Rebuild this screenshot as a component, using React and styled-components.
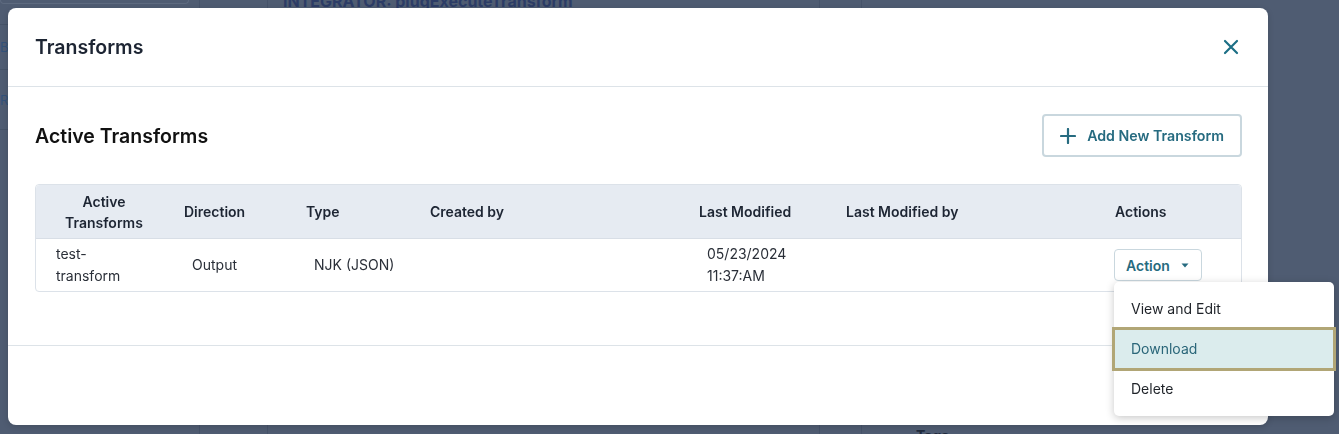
import React from "react";
import styled, { createGlobalStyle } from "styled-components";

const GlobalStyle = createGlobalStyle`
  html, body {
    margin: 0;
    padding: 0;
    width: 1339px;
    height: 434px;
    overflow: hidden;
    font-family: Inter, "Noto Sans", "Liberation Sans", sans-serif;
  }
  * { box-sizing: border-box; }
`;

/* ---------- page behind the dialog (dimmed) ---------- */
const Page = styled.div`
  width: 1339px;
  height: 434px;
  display: grid;
  grid-template-columns: 200px 68px 552px 42px 28px 1fr;
  background: #4f5c72;
  color: #2b3a58;
`;

const PageCol = styled.div`
  display: flex;
  flex-direction: column;
  border-right: ${({ $line }) => ($line ? "1px solid #46536a" : "none")};
  padding: ${({ $pad }) => $pad || "0"};
  font-size: 15px;
  font-weight: 600;
`;

const SideRow = styled.div`
  height: ${({ $h }) => $h}px;
  border-bottom: 1px solid #465368;
  display: flex;
  align-items: center;
  color: #33527a;
  font-weight: 400;
  font-size: 13px;
`;

const SideInput = styled.div`
  height: 4px;
  margin-right: 10px;
  border: 1px solid #5d6a7f;
  border-top: none;
  border-radius: 0 0 4px 4px;
`;

const PageTitle = styled.div`
  margin-top: -9px;
  font-size: 16px;
  font-weight: 700;
  color: #2c3c66;
  white-space: nowrap;
`;

const PageLabel = styled.div`
  margin-top: auto;
  margin-bottom: -10px;
  font-size: 14px;
  font-weight: 700;
  color: #1f2a3d;
`;

/* ---------- overlay + modal ---------- */
const Overlay = styled.div`
  position: fixed;
  inset: 0;
  padding: 8px 71px 9px 8px;
  display: flex;
`;

const Modal = styled.div`
  flex: 1;
  display: flex;
  flex-direction: column;
  background: #ffffff;
  border-radius: 8px;
  box-shadow: 0 2px 6px rgba(0, 0, 0, 0.15);
`;

const ModalHeader = styled.div`
  height: 79px;
  padding: 0 27px;
  display: flex;
  align-items: center;
  justify-content: space-between;
  border-bottom: 1px solid #dde3e8;
`;

const ModalTitle = styled.h2`
  margin: 0;
  font-size: 19.5px;
  font-weight: 600;
  color: #1d2533;
`;

const CloseButton = styled.button`
  border: none;
  background: none;
  padding: 0;
  width: 20px;
  height: 20px;
  display: flex;
  align-items: center;
  justify-content: center;
  color: #1c6f86;
  cursor: pointer;
`;

const ModalBody = styled.div`
  padding: 27px 26px 53px 27px;
  display: flex;
  flex-direction: column;
  gap: 27px;
  border-bottom: 1px solid #dde3e8;
`;

const Toolbar = styled.div`
  display: flex;
  align-items: center;
  justify-content: space-between;
`;

const SectionTitle = styled.h3`
  margin: 0;
  font-size: 19.5px;
  font-weight: 600;
  color: #111111;
`;

const OutlineButton = styled.button`
  display: flex;
  align-items: center;
  gap: ${({ $gap }) => $gap || 10}px;
  height: ${({ $h }) => $h}px;
  padding: ${({ $pad }) => $pad};
  background: #ffffff;
  border: ${({ $bw }) => $bw || 1}px solid #c9d7de;
  border-radius: 4px;
  color: #266b80;
  font-family: inherit;
  font-size: ${({ $fs }) => $fs || 14}px;
  font-weight: 600;
  cursor: pointer;
`;

const ModalFooter = styled.div`
  flex: 1;
`;

/* ---------- table ---------- */
const COLS = "136px 122px 124px 269px 147px 269px 1fr";

const Table = styled.div`
  border: 1px solid #dce2e9;
  border-radius: 4px;
`;

const HeadRow = styled.div`
  display: grid;
  grid-template-columns: ${COLS};
  height: 54px;
  background: #e6ebf2;
  border-bottom: 1px solid #d8dee6;
  border-radius: 4px 4px 0 0;
`;

const HeadCell = styled.div`
  display: flex;
  align-items: center;
  justify-content: ${({ $center }) => ($center ? "center" : "flex-start")};
  text-align: ${({ $center }) => ($center ? "center" : "left")};
  padding: 0 12px;
  font-size: 14px;
  font-weight: 600;
  line-height: 21px;
  color: #1d2533;
`;

const BodyRow = styled.div`
  display: grid;
  grid-template-columns: ${COLS};
  height: 52px;
`;

const Cell = styled.div`
  display: flex;
  align-items: center;
  padding: 0 20px 0 ${({ $pl }) => $pl || 20}px;
  font-size: 14px;
  line-height: 22px;
  color: #2a2f38;
`;

const CellText = styled.span`
  max-width: ${({ $w }) => ($w ? `${$w}px` : "none")};
`;

/* ---------- dropdown ---------- */
const ActionWrap = styled.div`
  position: relative;
`;

const Menu = styled.ul`
  position: absolute;
  top: calc(100% + 1px);
  left: 0;
  width: 220px;
  margin: 0;
  padding: 7px 0;
  list-style: none;
  background: #ffffff;
  border-radius: 5px;
  box-shadow: 0 2px 8px rgba(0, 0, 0, 0.22);
  z-index: 10;
`;

const MenuItem = styled.li`
  height: 40px;
  padding: 0 17px;
  display: flex;
  align-items: center;
  font-size: 14px;
  color: ${({ $active }) => ($active ? "#2a6679" : "#1f2329")};
  background: ${({ $active }) => ($active ? "#dbeced" : "transparent")};
  box-shadow: ${({ $active }) => ($active ? "0 0 0 2px #b1a676, inset 0 0 0 1px #b1a676" : "none")};
  cursor: pointer;
`;

const CloseIcon = () => (
  <svg width="16" height="16" viewBox="0 0 16 16" fill="none">
    <path d="M2 2L14 14M14 2L2 14" stroke="currentColor" strokeWidth="2.2" strokeLinecap="round" />
  </svg>
);

const PlusIcon = () => (
  <svg width="16" height="16" viewBox="0 0 16 16" fill="none">
    <path d="M8 1V15M1 8H15" stroke="currentColor" strokeWidth="2.2" strokeLinecap="round" />
  </svg>
);

const Caret = () => (
  <svg width="8" height="5" viewBox="0 0 8 5">
    <path d="M0.5 0.5H7.5L4 4.5Z" fill="currentColor" />
  </svg>
);

const headers = [
  { label: "Active Transforms", center: true },
  { label: "Direction" },
  { label: "Type" },
  { label: "Created by" },
  { label: "Last Modified" },
  { label: "Last Modified by" },
  { label: "Actions" },
];

const rows = [
  {
    name: "test-transform",
    direction: "Output",
    type: "NJK (JSON)",
    createdBy: "",
    modified: "05/23/2024 11:37:AM",
    modifiedBy: "",
  },
];

const menuItems = ["View and Edit", "Download", "Delete"];

export default function App() {
  return (
    <>
      <GlobalStyle />
      <Page>
        <PageCol $line>
          <SideInput />
          <SideRow $h={21} />
          <SideRow $h={45}>Bu</SideRow>
          <SideRow $h={60}>Ra</SideRow>
        </PageCol>
        <PageCol $line />
        <PageCol $line $pad="0 0 0 15px">
          <PageTitle>INTEGRATOR: plugExecuteTransform</PageTitle>
        </PageCol>
        <PageCol $line />
        <PageCol />
        <PageCol $pad="0 0 0 26px">
          <PageLabel>Tags</PageLabel>
        </PageCol>
      </Page>

      <Overlay>
        <Modal>
          <ModalHeader>
            <ModalTitle>Transforms</ModalTitle>
            <CloseButton aria-label="Close">
              <CloseIcon />
            </CloseButton>
          </ModalHeader>

          <ModalBody>
            <Toolbar>
              <SectionTitle>Active Transforms</SectionTitle>
              <OutlineButton $h={43} $pad="0 16px 0 16px" $fs={14.2} $bw={2} $gap={11}>
                <PlusIcon />
                Add New Transform
              </OutlineButton>
            </Toolbar>

            <Table>
              <HeadRow>
                {headers.map((h) => (
                  <HeadCell key={h.label} $center={h.center}>
                    {h.label}
                  </HeadCell>
                ))}
              </HeadRow>
              {rows.map((r) => (
                <BodyRow key={r.name}>
                  <Cell>
                    <CellText $w={70}>{r.name}</CellText>
                  </Cell>
                  <Cell>{r.direction}</Cell>
                  <Cell>{r.type}</Cell>
                  <Cell>{r.createdBy}</Cell>
                  <Cell>
                    <CellText $w={90}>{r.modified}</CellText>
                  </Cell>
                  <Cell>{r.modifiedBy}</Cell>
                  <Cell $pl={11}>
                    <ActionWrap>
                      <OutlineButton $h={32} $pad="0 12px 0 11px" $gap={11}>
                        Action
                        <Caret />
                      </OutlineButton>
                      <Menu>
                        {menuItems.map((m) => (
                          <MenuItem key={m} $active={m === "Download"}>
                            {m}
                          </MenuItem>
                        ))}
                      </Menu>
                    </ActionWrap>
                  </Cell>
                </BodyRow>
              ))}
            </Table>
          </ModalBody>

          <ModalFooter />
        </Modal>
      </Overlay>
    </>
  );
}
